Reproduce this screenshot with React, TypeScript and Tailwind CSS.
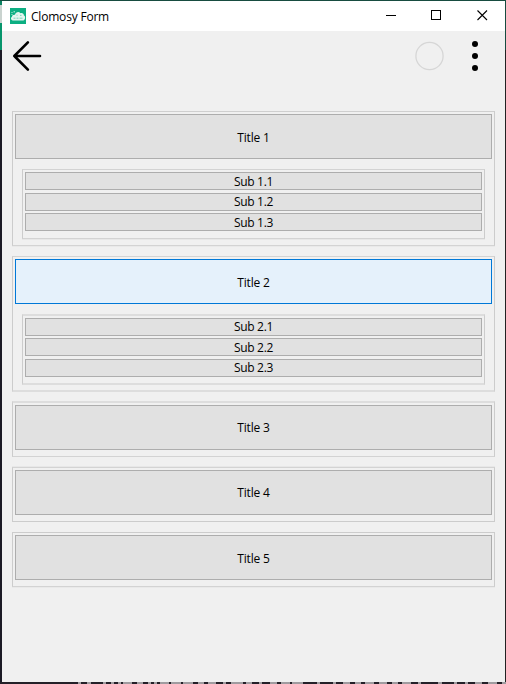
import React from "react";

type Sub = { label: string; gap: string; low?: boolean };
type Group = {
  title: string;
  active?: boolean;
  low?: boolean;
  box: string;
  subBox?: string;
  subs?: Sub[];
};

const groups: Group[] = [
  {
    title: "Title 1",
    low: true,
    box: "mt-[30px] h-[135px] border-t border-b border-t-[#cfcfcf] border-b-[#d3d3d3] pt-[2px] shadow-[0_1px_0_#e9e9e9]",
    subBox: "mt-[10px] h-[70px] border-t border-b border-t-[#d3d3d3] border-b-[#d3d3d3] pt-[2px] shadow-[0_1px_0_#e7e7e7]",
    subs: [
      { label: "Sub 1.1", gap: "mt-0", low: true },
      { label: "Sub 1.2", gap: "mt-[3px]" },
      { label: "Sub 1.3", gap: "mt-[2px]", low: true },
    ],
  },
  {
    title: "Title 2",
    active: true,
    low: true,
    box: "mt-[10px] h-[136px] border-t border-b-2 border-t-[#d3d3d3] border-b-[#dddddd] pt-[2px]",
    subBox: "mt-[10px] h-[71px] border-t-2 border-b-2 border-t-[#dddddd] border-b-[#dddddd] pt-[2px]",
    subs: [
      { label: "Sub 2.1", gap: "mt-0" },
      { label: "Sub 2.2", gap: "mt-[2px]", low: true },
      { label: "Sub 2.3", gap: "mt-[3px]" },
    ],
  },
  {
    title: "Title 3",
    box: "mt-[9px] h-[56px] border-t-2 border-b border-t-[#dddddd] border-b-[#d3d3d3] pt-[2px]",
  },
  {
    title: "Title 4",
    box: "mt-[10px] h-[55px] border-t border-b border-t-[#d3d3d3] border-b-[#cccccc] pt-[2px] shadow-[0_-1px_0_#e7e7e7]",
  },
  {
    title: "Title 5",
    low: true,
    box: "mt-[10px] h-[55px] border-t border-b border-t-[#cccccc] border-b-[#d3d3d3] pt-[2px] shadow-[0_1px_0_#e9e9e9]",
  },
];

function TitleBar() {
  return (
    <header className="flex h-[30px] shrink-0 items-center bg-white pl-2">
      <svg width="16" height="16" viewBox="0 0 16 16" className="mt-[-1px]">
        <rect width="16" height="16" fill="#0caf82" />
        <path
          d="M2.6 12.4C0.6 12 0.5 9.6 2 8.8 2 7.2 3.6 6.3 5 6.8 5.6 4 9 3.2 10.4 5.2 12 4.4 14 5.4 13.8 7.2 15.8 8 15.5 12 13.2 12.4Z"
          fill="#e4f6f0"
        />
        <path d="M3.5 10.2h2M6.5 10.2h2M9.5 10.2h3M6.5 7.2h1M10 7.4h1.5" stroke="#6fcfb4" strokeWidth="0.9" />
        <path d="M1.5 4.5h1M3.5 3.8h1.5M1.5 6.5h1" stroke="#c5ecdf" />
      </svg>
      <span className="ml-[5px] mt-px text-[12px] leading-[16px] tracking-[-0.2px] text-black">Clomosy Form</span>
      <div className="ml-auto flex h-full">
        <svg width="46" height="30" shapeRendering="crispEdges">
          <path d="M19 14.5h10" stroke="#000" />
        </svg>
        <svg width="46" height="30" shapeRendering="crispEdges">
          <path d="M18.5 9.5h9v9h-9z" stroke="#000" fill="none" />
        </svg>
        <svg width="46" height="30">
          <path d="M18.5 9.5l9.5 9.5M28 9.5l-9.5 9.5" stroke="#000" strokeWidth="1.1" />
        </svg>
      </div>
    </header>
  );
}

function Toolbar() {
  return (
    <div className="flex h-[50px] shrink-0 items-center pl-[10px]">
      <svg width="32" height="32" viewBox="0 0 32 32" fill="none" stroke="#000" strokeWidth="2.6" strokeLinecap="round" strokeLinejoin="round">
        <path d="M28 16H2.3M15.9 2.4L2.3 16l13.6 13.6" />
      </svg>
      <svg width="30" height="30" className="ml-auto" fill="none">
        <circle cx="14.5" cy="15" r="13.6" stroke="#d6d6d6" strokeWidth="1.3" />
      </svg>
      <svg width="60" height="32">
        <circle cx="30" cy="4" r="3" />
        <circle cx="30" cy="16" r="3" />
        <circle cx="30" cy="28" r="3" />
      </svg>
    </div>
  );
}

function Panel({ group }: { group: Group }) {
  return (
    <section className={`mx-[10px] w-[483px] shrink-0 border-x border-x-[#cccccc] px-[2px] ${group.box}`}>
      <button
        className={`block h-[45px] w-full border tracking-[-0.15px] ${group.low ? "pt-[2px]" : ""} ${
          group.active ? "border-[#0078d7] bg-[#e5f1fb]" : "border-[#adadad] bg-[#e1e1e1]"
        }`}
      >
        {group.title}
      </button>
      {group.subs && (
        <div className={`mx-[7px] border-x border-x-[#cccccc] px-[2px] ${group.subBox}`}>
          {group.subs.map((s) => (
            <button
              key={s.label}
              className={`flex h-[18px] w-full items-center justify-center border border-[#adadad] bg-[#e1e1e1] leading-[16px] tracking-[-0.3px] ${
                s.low ? "pt-[2px]" : ""
              } ${s.gap}`}
            >
              {s.label}
            </button>
          ))}
        </div>
      )}
    </section>
  );
}

export default function App() {
  return (
    <div className="h-[684px] w-[506px] overflow-hidden bg-[#1b1a25] font-['Open_Sans','Noto_Sans',sans-serif] text-[12px] text-black">
      <div className="h-px bg-[#174c40]" />
      <div className="flex">
        <div className="flex h-[681px] w-[2px] flex-col">
          <div className="h-[4px] bg-[#0b8463]" />
          <div className="h-[18px] bg-[#c9d3cf]" />
          <div className="h-[27px] bg-[#07956c]" />
        </div>
        <main className="flex h-[681px] w-[503px] flex-col bg-[#f0f0f0]">
          <TitleBar />
          <Toolbar />
          {groups.map((g) => (
            <Panel key={g.title} group={g} />
          ))}
        </main>
        <div className="h-[681px] w-px bg-[#222222]">
          <div className="h-[49px] bg-[#174c40]" />
        </div>
      </div>
      <svg width="506" height="2" className="block" shapeRendering="crispEdges">
        <rect width="506" height="2" fill="#242028" />
        <path
          d="M78 1h3M87 1h4M103 1h3M111 1h3M118 1h3M123 1h9M137 1h6M148 1h3M154 1h3M160 1h9M171 1h10M183 1h10M198 1h6M208 1h8M223 1h3M231 1h12M246 1h6M259 1h3M270 1h7M281 1h9M292 1h11M317 1h3M333 1h3M343 1h7M355 1h6M365 1h9M379 1h8M392 1h6M402 1h9M418 1h3M438 1h4M454 1h3M465 1h3M475 1h7M488 1h9M502 1h4"
          stroke="#a09ca0"
          strokeWidth="2"
        />
      </svg>
    </div>
  );
}
